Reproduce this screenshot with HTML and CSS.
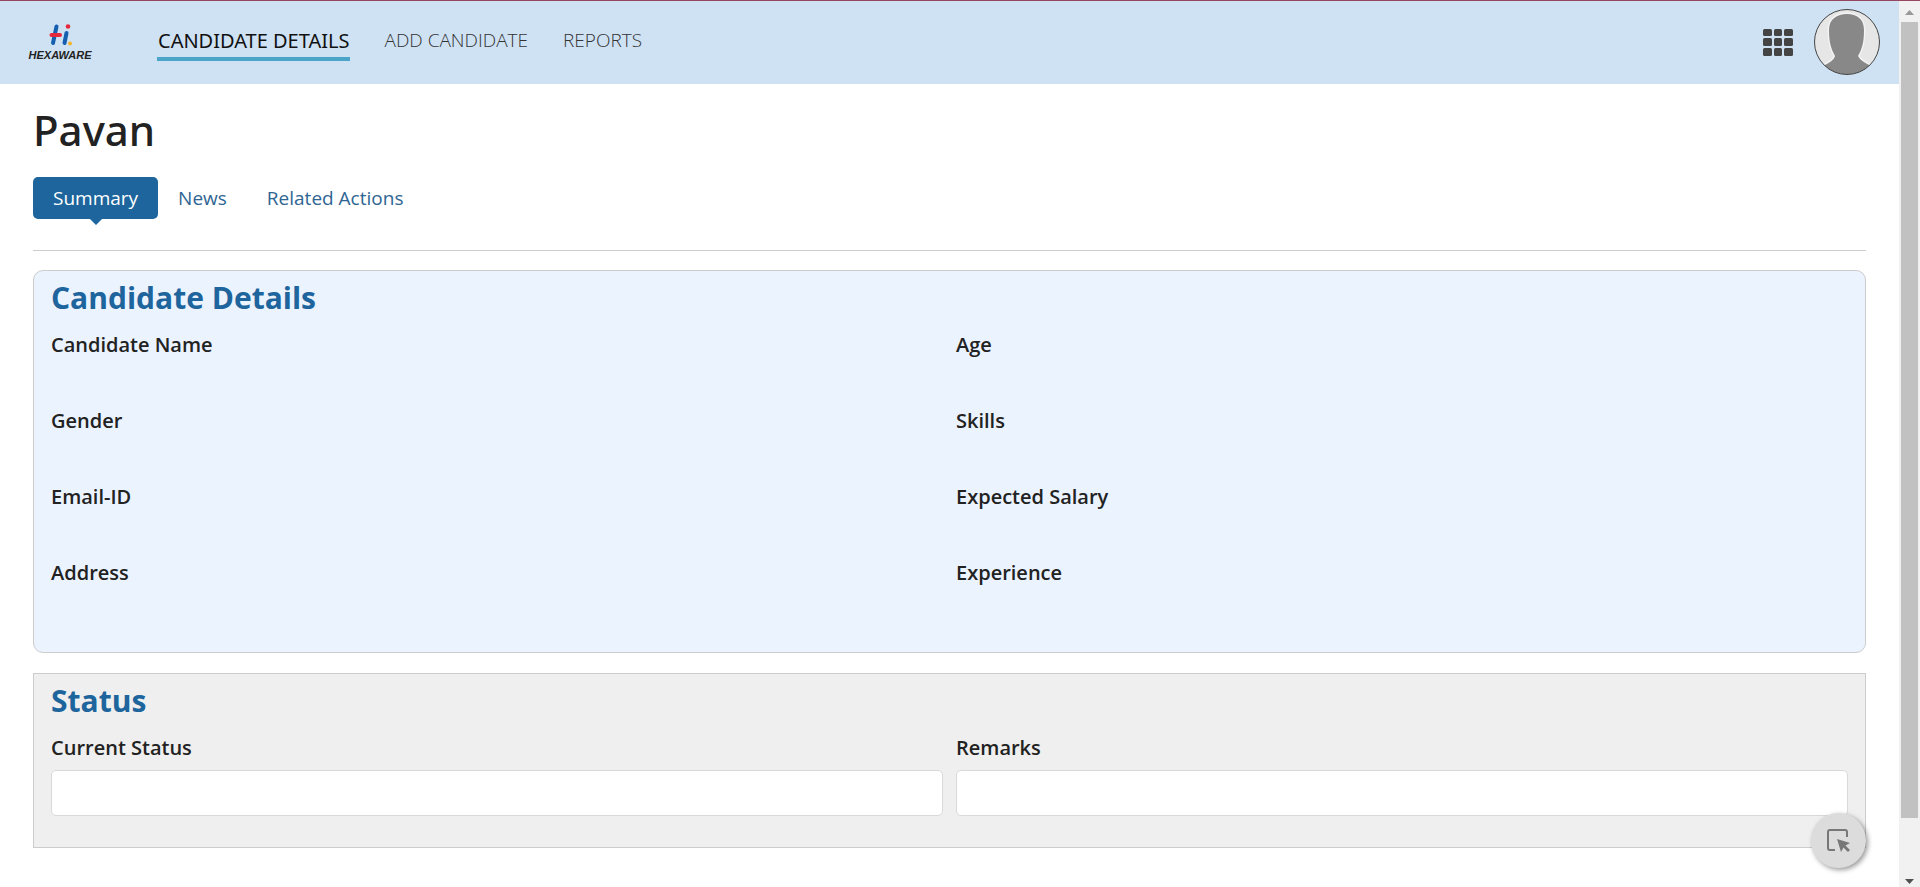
FILE: index.html
```html
<!DOCTYPE html>
<html lang="en">
<head>
  <meta charset="UTF-8">
  <meta name="viewport" content="width=device-width, initial-scale=1.0">
  <title>Pavan</title>
  <link rel="stylesheet" href="styles.css">
</head>
<body>
  <div class="page">
    <header class="header">
      <a class="logo" href="#">
        <svg class="logo-mark" width="24" height="24" viewBox="0 0 24 24" aria-hidden="true">
          <g fill="none" stroke-linecap="round" stroke-width="4">
            <path d="M8.500 3.500 L5 20" stroke="#1560b0"/>
            <path d="M18.500 10 L16.500 20" stroke="#1560b0"/>
            <path d="M3.500 12 H12" stroke="#e5293d"/>
          </g>
          <circle cx="20" cy="3.500" r="2.300" fill="#e5293d"/>
          <circle cx="22" cy="20.500" r="2" fill="#f3b62b"/>
        </svg>
        <span class="logo-text">HEXAWARE</span>
      </a>
      <nav class="nav">
        <a class="active" href="#">CANDIDATE DETAILS</a>
        <a href="#">ADD CANDIDATE</a>
        <a href="#">REPORTS</a>
      </nav>
      <div class="tools">
        <button class="apps" type="button" aria-label="Apps">
          <svg width="30" height="27" viewBox="0 0 30 27" fill="#444">
            <rect x="0" y="0" width="9" height="7" rx="1.500"/>
            <rect x="11" y="0" width="8" height="7" rx="1.500"/>
            <rect x="21" y="0" width="9" height="7" rx="1.500"/>
            <rect x="0" y="9" width="9" height="8" rx="1.500"/>
            <rect x="11" y="9" width="8" height="8" rx="1.500"/>
            <rect x="21" y="9" width="9" height="8" rx="1.500"/>
            <rect x="0" y="19" width="9" height="8" rx="1.500"/>
            <rect x="11" y="19" width="8" height="8" rx="1.500"/>
            <rect x="21" y="19" width="9" height="8" rx="1.500"/>
          </svg>
        </button>
        <button class="avatar" type="button" aria-label="User">
          <svg width="66" height="66" viewBox="0 0 66 66">
            <defs>
              <clipPath id="face"><circle cx="33" cy="33" r="32.500"/></clipPath>
            </defs>
            <g clip-path="url(#face)">
              <rect width="66" height="66" fill="#e6e6e6"/>
              <path d="M33 5 C43 5 50 10 50 21 C50 33 48 40 44 47 C46 51 50 53 55 56 L66 66 H0 L11 56 C16 53 20 51 21 47 C17 40 15 33 15 21 C15 10 23 5 33 5 Z" fill="#888" stroke="#f3f3f3" stroke-width="3" paint-order="stroke"/>
            </g>
            <circle cx="33" cy="33" r="32.500" fill="none" stroke="#444"/>
          </svg>
        </button>
      </div>
    </header>

    <main class="content">
      <h1>Pavan</h1>
      <nav class="tabs">
        <a class="active" href="#">Summary</a>
        <a href="#">News</a>
        <a href="#">Related Actions</a>
      </nav>

      <section class="card details">
        <h2>Candidate Details</h2>
        <dl class="grid">
          <div class="field"><dt>Candidate Name</dt><dd></dd></div>
          <div class="field"><dt>Age</dt><dd></dd></div>
          <div class="field"><dt>Gender</dt><dd></dd></div>
          <div class="field"><dt>Skills</dt><dd></dd></div>
          <div class="field"><dt>Email-ID</dt><dd></dd></div>
          <div class="field"><dt>Expected Salary</dt><dd></dd></div>
          <div class="field"><dt>Address</dt><dd></dd></div>
          <div class="field"><dt>Experience</dt><dd></dd></div>
        </dl>
      </section>

      <section class="card status">
        <h2>Status</h2>
        <div class="grid">
          <div class="input-group">
            <label for="current-status">Current Status</label>
            <input type="text" id="current-status">
          </div>
          <div class="input-group">
            <label for="remarks">Remarks</label>
            <input type="text" id="remarks">
          </div>
        </div>
      </section>
    </main>
  </div>

  <div class="scrollbar" aria-hidden="true">
    <svg width="9" height="5" viewBox="0 0 9 5"><path d="M0 5 L4.500 0 L9 5 Z" fill="#999"/></svg>
    <div class="track"><div class="thumb"></div></div>
    <svg width="9" height="5" viewBox="0 0 9 5"><path d="M0 0 L4.500 5 L9 0 Z" fill="#505050"/></svg>
  </div>

  <button class="inspect" type="button" aria-label="Inspect">
    <svg width="24" height="24" viewBox="0 0 24 24">
      <path d="M8 21 H3 Q1 21 1 19 V3 Q1 1 3 1 H18 Q20 1 20 3 V8" fill="none" stroke="#777" stroke-width="2"/>
      <path d="M10 10 L23 14 L18.500 16.500 L23 21 L21 23 L16.500 18.500 L14 23 Z" fill="#777"/>
    </svg>
  </button>
</body>
</html>
```

FILE: styles.css
```css
* {
  box-sizing: border-box;
}

body {
  margin: 0;
  display: flex;
  height: 100vh;
  overflow: hidden;
  font-family: "Open Sans", sans-serif;
  font-size: 19px;
  color: #222;
  background-color: #fff;
  border-top: 1px solid #984660;
}

a {
  text-decoration: none;
}

button {
  padding: 0;
  border: none;
  background: none;
  cursor: pointer;
}

svg {
  display: block;
}

.page {
  flex: 1;
  min-width: 0;
}

/* top bar */
.header {
  display: flex;
  align-items: center;
  height: 83px;
  padding: 0 19px 1px 28px;
  background-color: #cfe2f3;
}

.logo {
  display: flex;
  flex-direction: column;
  align-items: center;
  gap: 2px;
  width: 64px;
}

.logo-text {
  font: italic bold 11px/12px "Liberation Sans", sans-serif;
  color: #222;
}

.nav {
  display: flex;
  gap: 33px;
  margin-left: 65px;
}

.nav a {
  padding: 0 1px;
  line-height: 33px;
  font-weight: 300;
  color: #333;
  border-bottom: 4px solid transparent;
}

.nav .active {
  font-family: "Noto Sans", sans-serif;
  font-size: 20px;
  font-weight: 400;
  color: #111;
  border-color: #4aa5c8;
}

.tools {
  display: flex;
  align-items: center;
  gap: 21px;
  margin-left: auto;
}

/* record */
.content {
  padding: 19px 33px;
}

h1 {
  margin: 0 0 20px;
  font-family: "Noto Sans", sans-serif;
  font-size: 42px;
  line-height: 54px;
  font-weight: 500;
}

.tabs {
  display: flex;
  padding-bottom: 31px;
  margin-bottom: 19px;
  border-bottom: 1px solid #ccc;
}

.tabs a {
  position: relative;
  padding: 0 20px;
  line-height: 42px;
  color: #2f6593;
  border-radius: 5px;
}

.tabs .active {
  color: #fff;
  background-color: #1d659c;
}

.tabs .active::after {
  content: "";
  position: absolute;
  top: 100%;
  left: 50%;
  margin-left: -6px;
  border: 6px solid transparent;
  border-top-color: #1d659c;
  border-bottom: none;
}

.card {
  padding: 7px 17px 16px;
  margin-bottom: 20px;
  border: 1px solid #ccc;
}

.details {
  background-color: #ebf3ff;
  border-radius: 10px;
}

.status {
  background-color: #efefef;
  padding-bottom: 31px;
}

h2 {
  margin: 0 0 14px;
  font-size: 30px;
  line-height: 40px;
  font-weight: 700;
  color: #1d659c;
}

.grid {
  display: grid;
  grid-template-columns: 1fr 1fr;
  column-gap: 13px;
  margin: 0;
}

.field {
  height: 76px;
}

dt,
label {
  display: block;
  font-size: 20px;
  line-height: 26px;
  font-weight: 600;
}

dd {
  margin: 0;
}

input {
  display: block;
  width: 100%;
  height: 46px;
  margin-top: 9px;
  padding: 0 12px;
  font: inherit;
  background-color: #fff;
  border: 1px solid #d9d9d9;
  border-radius: 5px;
}

.scrollbar {
  display: flex;
  flex-direction: column;
  align-items: center;
  justify-content: space-between;
  width: 21px;
  padding: 9px 0 3px;
  background-color: #f1f1f1;
}

.track {
  flex: 1;
  width: 17px;
  padding: 7px 0 61px;
}

.thumb {
  height: 100%;
  background-color: #c1c1c1;
}

.inspect {
  position: fixed;
  right: 54px;
  bottom: 19px;
  display: flex;
  align-items: center;
  justify-content: center;
  width: 55px;
  height: 55px;
  border-radius: 50%;
  background-color: #dcdcdc;
  box-shadow: 2px 2px 5px rgba(0, 0, 0, 0.4);
}
```
